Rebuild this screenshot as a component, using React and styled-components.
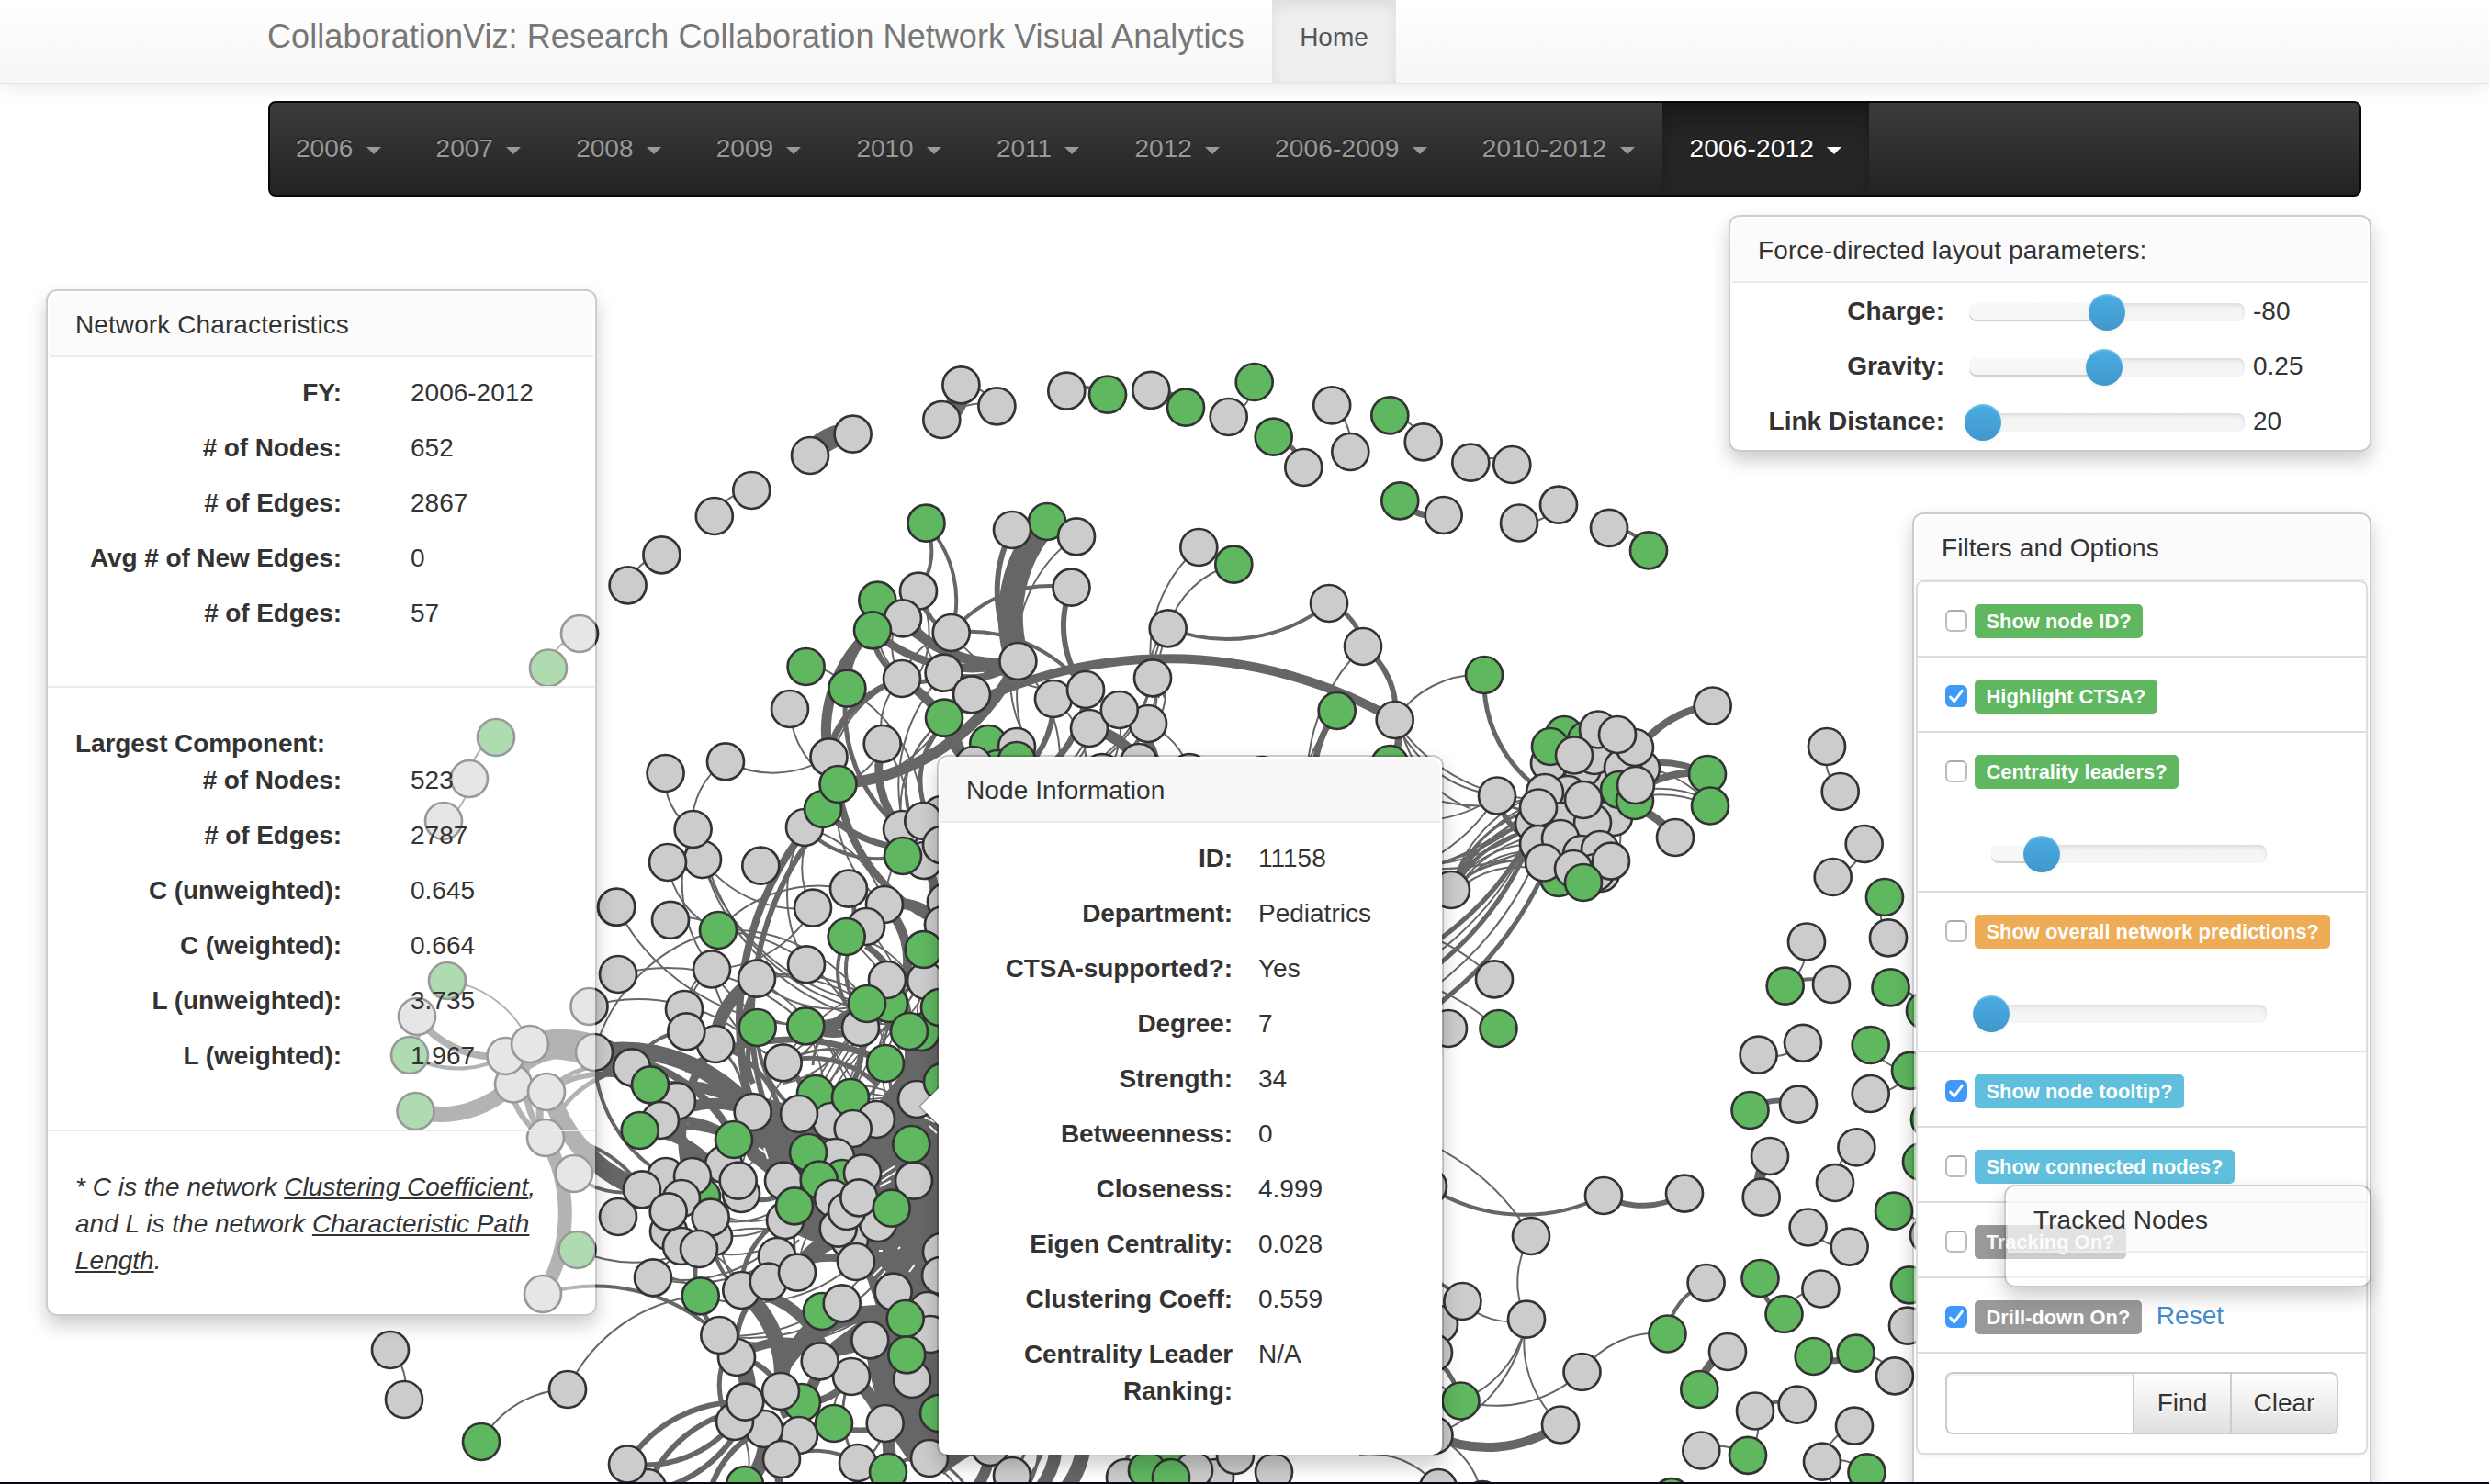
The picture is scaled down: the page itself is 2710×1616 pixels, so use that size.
import React from "react";
import styled, { createGlobalStyle, css } from "styled-components";

const GlobalStyle = createGlobalStyle`
  * { box-sizing: border-box; }
  html, body { margin: 0; padding: 0; background: #fff; }
  body {
    font-family: "Liberation Sans", Arial, Helvetica, sans-serif;
    font-size: 28px;
    line-height: 40px;
    color: #333;
  }
`;

const Page = styled.div`
  position: relative;
  width: 2710px;
  height: 1616px;
  overflow: hidden;
  background: #fff;
  border-bottom: 2px solid #060914;
`;

/* ---------- navigation ---------- */

const TopBar = styled.header`
  position: relative;
  z-index: 1;
  display: flex;
  height: 92px;
  padding-left: 291px;
  background: linear-gradient(to bottom, #fff, #f6f6f6);
  border-bottom: 2px solid #e6e6e6;
  box-shadow: 0 2px 20px rgba(0, 0, 0, 0.1);
`;

const Brand = styled.div`
  width: 1094px;
  padding-top: 20px;
  font-size: 36px;
  letter-spacing: 0.07px;
  color: #777;
  white-space: nowrap;
`;

const TopLink = styled.a`
  width: 135px;
  padding-top: 21px;
  text-align: center;
  color: #555;
  background: #efefef;
  box-shadow: inset 0 6px 16px rgba(0, 0, 0, 0.08);
`;

const YearBar = styled.nav`
  position: relative;
  z-index: 1;
  display: flex;
  width: 2279px;
  height: 104px;
  margin: 18px 0 0 292px;
  background: linear-gradient(to bottom, #3c3c3c, #222);
  border: 2px solid #080808;
  border-radius: 8px;
`;

const YearItem = styled.a`
  display: flex;
  align-items: center;
  gap: 14.3px;
  height: 100px;
  padding: 0 30px;
  color: #999;
  text-shadow: 0 -2px 0 rgba(0, 0, 0, 0.25);
  white-space: nowrap;
  &:first-child { margin-left: -2px; }
  ${(p) => p.$range && css`letter-spacing: 0.17px;`}
  ${(p) =>
    p.$active &&
    css`
      color: #fff;
      background: linear-gradient(to bottom, #1c1c1c, #252525 40%, #252525);
      box-shadow: inset 0 6px 16px rgba(0, 0, 0, 0.2);
    `}
`;

const Caret = styled.span`
  width: 0;
  height: 0;
  margin-top: 4px;
  border-left: 8px solid transparent;
  border-right: 8px solid transparent;
  border-top: 8px solid currentColor;
`;

/* ---------- floating panels ---------- */

const Panel = styled.section`
  position: absolute;
  z-index: 2;
  left: ${(p) => p.$x}px;
  top: ${(p) => p.$y}px;
  width: ${(p) => p.$w}px;
  height: ${(p) => p.$h}px;
  padding: 2px;
  background: ${(p) => (p.$solid ? "#fff" : "rgba(255, 255, 255, 0.5)")};
  background-clip: padding-box;
  border: 2px solid rgba(0, 0, 0, 0.2);
  border-radius: 12px;
  box-shadow: 0 10px 20px rgba(0, 0, 0, 0.2);
`;

const PanelTitle = styled.h3`
  margin: 0;
  padding: 17px 28px 15px;
  font-size: 28px;
  font-weight: 400;
  line-height: 36px;
  letter-spacing: 0.1px;
  background: ${(p) => (p.$solid ? "#f7f7f7" : "rgba(247, 247, 247, 0.5)")};
  border-bottom: 2px solid #ebebeb;
  border-radius: 10px 10px 0 0;
`;

const Section = styled.div`
  margin: 0 -2px;
  padding: ${(p) => p.$pad};
  border-bottom: ${(p) => (p.$last ? "none" : "2px solid #ebebeb")};
`;

const Field = styled.div`
  display: flex;
  align-items: flex-start;
  gap: ${(p) => p.$gap}px;
  margin-bottom: 20px;
`;

const FieldLabel = styled.div`
  width: ${(p) => p.$w}px;
  text-align: right;
  font-weight: 700;
  letter-spacing: -0.1px;
`;

const SubHeading = styled.div`
  font-weight: 700;
  letter-spacing: -0.1px;
`;

const Note = styled.p`
  margin: 0;
  font-style: italic;
  white-space: nowrap;
`;

const Arrow = styled.div`
  position: absolute;
  left: -22px;
  top: 359px;
  width: 0;
  height: 0;
  border: 22px solid transparent;
  border-left-width: 0;
  border-right-color: rgba(0, 0, 0, 0.25);
  &::after {
    content: "";
    position: absolute;
    left: 2px;
    top: -20px;
    border: 20px solid transparent;
    border-left-width: 0;
    border-right-color: #fff;
  }
`;

/* ---------- sliders ---------- */

const SliderRow = styled.div`
  display: flex;
  align-items: center;
  height: 60px;
`;

const SliderLabel = styled.div`
  width: 231px;
  margin: 2px 27px 0 0;
  text-align: right;
  font-weight: 700;
  white-space: nowrap;
`;

const SliderValue = styled.div`
  margin: 2px 0 0 9px;
`;

const Track = styled.div`
  position: relative;
  width: 300px;
  height: 20px;
  margin: ${(p) => p.$margin || "4px 0 0"};
  border-radius: 8px;
  background: linear-gradient(to bottom, #f2f2f2, #f7f7f7);
  box-shadow: inset 0 2px 4px rgba(0, 0, 0, 0.1);
`;

const Filled = styled.div`
  height: 20px;
  border-radius: 8px;
  background: linear-gradient(to bottom, #f9f9f9, #f5f5f5);
  box-shadow: inset 0 -2px 0 rgba(0, 0, 0, 0.15);
`;

const Knob = styled.div`
  position: absolute;
  top: -10px;
  width: 40px;
  height: 40px;
  margin-left: -20px;
  border-radius: 50%;
  background: linear-gradient(to bottom, #49ade3, #4297ca);
  box-shadow: inset 0 2px 0 rgba(255, 255, 255, 0.2), 0 2px 4px rgba(0, 0, 0, 0.05);
`;

function Slider({ at, margin }) {
  return (
    <Track $margin={margin}>
      <Filled style={{ width: at }} />
      <Knob style={{ left: at }} />
    </Track>
  );
}

/* ---------- filter list ---------- */

const FilterList = styled.div`
  display: flex;
  flex-direction: column;
  height: 952px;
  background: #fff;
  border: 2px solid #ddd;
  border-radius: 8px;
  box-shadow: 0 2px 4px rgba(0, 0, 0, 0.05);
`;

const FilterRow = styled.div`
  height: ${(p) => (p.$tall ? 174 : 82)}px;
  padding: 20px 30px;
  border-bottom: 2px solid #ddd;
`;

const FilterLine = styled.div`
  display: flex;
  align-items: center;
  height: 44px;
`;

const Box = styled.span`
  display: flex;
  width: 24px;
  height: 24px;
  margin-right: 8px;
  border-radius: 6px;
  border: ${(p) => (p.$on ? "none" : "2px solid #bcbcbc")};
  border-top-color: #a9a9a9;
  background: ${(p) => (p.$on ? "#3f99fb" : "#fff")};
`;

const Tag = styled.span`
  height: 37px;
  padding: 0 12.5px;
  border-radius: 5px;
  font-size: 21.9px;
  font-weight: 700;
  line-height: 37px;
  color: #fff;
  white-space: nowrap;
  background: ${(p) => ({ green: "#5fb760", orange: "#eeac57", blue: "#60bfdc", gray: "#999" }[p.$tone])};
`;

const ResetLink = styled.a`
  margin-left: 16px;
  margin-top: -3px;
  color: #428bca;
`;

const Search = styled.div`
  display: flex;
  padding: 20px 30px;
`;

const SearchInput = styled.input`
  width: 206px;
  height: 68px;
  padding: 0 12px;
  font: inherit;
  border: 2px solid #ccc;
  border-radius: 8px 0 0 8px;
  box-shadow: inset 0 2px 2px rgba(0, 0, 0, 0.06);
  outline: none;
`;

const SearchButton = styled.button`
  width: ${(p) => p.$w}px;
  height: 68px;
  margin-left: -2px;
  padding: 0;
  font: inherit;
  color: #333;
  text-shadow: 0 2px 0 #fff;
  border: 2px solid #ccc;
  border-radius: ${(p) => (p.$end ? "0 8px 8px 0" : 0)};
  background: linear-gradient(to bottom, #fff, #e0e0e0);
`;

function Filter({ on, tone, label, slider, children }) {
  return (
    <FilterRow $tall={slider !== undefined}>
      <FilterLine>
        <Box $on={on}>
          {on && (
            <svg width="24" height="24" viewBox="0 0 24 24" fill="none">
              <path d="M5.5 13 L9.8 17.8 L18.4 6.2" stroke="#fff" strokeWidth="2.8" strokeLinecap="round" strokeLinejoin="round" />
            </svg>
          )}
        </Box>
        <Tag $tone={tone}>{label}</Tag>
        {children}
      </FilterLine>
      {slider !== undefined && <Slider at={slider} margin="58px 0 0 50px" />}
    </FilterRow>
  );
}

/* ---------- network graph ---------- */

const Canvas = styled.svg`
  position: absolute;
  left: 0;
  top: 0;
`;

/* [x, y] is an ordinary researcher, [x, y, 1] is CTSA-supported; later entries are drawn on top */
const nodes = [
  [597,727.5,1],[631,690],[540,803,1],[511,848],[483,894],[487,1068,1],[454,1107],[446,1149,1],[452.5,1210,1],
  [559,1180.5],[550.5,1150],[577,1137],[595,1189],[641.5,1096],[647,1146],[594,1239],[625,1278],[628.5,1361,1],
  [591,1409],[425,1470],[440,1524],[618,1513],[524,1570,1],[671,988],[673,1061],[673,1325],
  [683.6,637.3],[720.4,604.3],[777.8,562],[818.3,534],[882,496],[928.6,472.7],[1046.4,419.3],[1025.3,457],[1085.4,442.3],
  [1008.5,569.7,1],[1140,568,1],[1102,577],[1172,584.3],[1166.5,639.7],[1000,643.7],[955.3,653.7,1],[983,673.3],[950,686.3,1],
  [1035.7,689],[1108.4,720],[877.6,726,1],[922.4,749.7,1],[982,739],[1027.6,732.7],[1058,756.3],[1147,761],[1250,788],
  [1255,738.3],[1182,751],[1186,793],[1218.8,773],[1028,781.7,1],[860,772],[960.7,810],[902.5,824.3],[876,901],
  [896,881,1],[912.5,854,1],[790,829.3],[724.6,842],[1076.2,810,1],[1107,813],[1086,837,1],[1060,833],[1107,828,1],
  [1240,830],[1200,841],[1295,841],[1374,844],
  [1161.3,425.7],[1206,429.7,1],[1253.3,424.8],[1291,443.7,1],[1337.7,454],[1365.7,416,1],[1386.7,475.7,1],[1419.3,509],[1450.2,441.3],
  [1470.3,492],[1513.3,452.3,1],[1549.7,481.3],[1601.3,503.7],[1646.3,506],[1524.3,545.3,1],[1571.7,561],[1305.3,596],[1343.3,614.7,1],
  [1271.7,684.3],[1447,657],[1484,704],[1455.7,774,1],[1518.7,784],[1513.3,832,1],[1616,735,1],
  [1654,569.5],[1697,549.7],[1752,574.8],[1795,599.4,1],[1864.7,768.5],[1859,843,1],[1862,877.5,1],[1824,912],
  [1630,866.5],[1580,969],
  [1703,800,1],[1727,806,1],[1687,831],[1740,843],[1723,837],[1736,823],[1787,837],[1767,836],[1780,814],[1740,794.5],
  [1707,865],[1682,863],[1757,890],[1700,894],[1734,896],[1763,860,1],[1780,872,1],[1781,855],[1724,871],
  [1670,897],[1675,879.5],[1761,800],[1688,813,1],[1714,822.5],[1675,919],[1699,913],[1722,930],[1742,925],
  [1697,956,1],[1681,939.5],[1743,951],[1737,950],[1713,946],[1754,937.6],[1724,961,1],
  [1989,813],[2003.7,862],[2029.7,919],[1995.7,955],[2052,977,1],
  [765,936],[727,939],[754.6,903],[828.3,942.7],[671.3,987.7],[730,1001.8],[782,1013,1],[775,1055.5],[824,1065.7],
  [1025,887],[982,903],[1006,937],[1005.3,894],[1025,920],[983,932,1],[885,988.7],[963,985],[924,967.7],[943,1009],
  [921.7,1020,1],[1030,982],[1027,1007],[1008,1068],[1005.7,1034,1],[878,1050.3],[937,1119],[968,1093,1],[966,1067],
  [944,1093,1],[1003,1124,1],[1023,1097,1],[990,1123,1],[964,1158,1],[824.7,1119,1],[877.3,1117.3,1],[852.7,1157.3],
  [779,1137],[745,1099],[747.3,1123.3],[737,1199],[688,1162.3],[708,1181.3,1],[998,1197],[1026,1178,1],
  [819.7,1211],[888,1191,1],[905,1221],[870,1213],[926,1195,1],[954,1219],[928.7,1229],[719,1220],[696.7,1231,1],
  [788,1268],[799,1241,1],[910,1260],[880,1255,1],[992.3,1246,1],[995,1285.7],[853,1285.7],[725,1281],[764,1303,1],
  [754,1281],[699,1295.3],[728,1341],[742,1357],[777,1347],[742,1305],[727.7,1319.3],[773.7,1325.7],[761,1360],
  [807,1300],[803.7,1285.7],[711,1391.3],[762.7,1411.3,1],[917,1283,1],[891.7,1284.7,1],[907,1305],[939,1277.3],[925,1350],
  [912.7,1337.7],[956,1332],[922,1319],[935.3,1304.3],[970.7,1315.7,1],[855,1329],[865,1313.3,1],[932,1374],[846,1368],
  [807.3,1405],[836.7,1395.7],[868,1385.7],[1025,1363],[1024,1389],[972.7,1406.7],[1010,1427],[1013,1453],[985.7,1436,1],
  [993,1502],[987.3,1475.3,1],[895,1428,1],[916.7,1419.3],[927,1499],[947.3,1459.3],[892.7,1482.3],[802,1478],[783.3,1454],
  [873,1527,1],[850,1515],[870,1563],[832,1556],[800,1548],[811.3,1526.7],[908,1550,1],[963.7,1550],[1022,1539,1],
  [1012,1588],[851,1589],[934,1593],[967,1603,1],[811,1617,1],[705,1620],[683,1594.5],
  [1078,1576],[1102,1607],[1225,1609],[1269,1591,1],[1249,1601,1],[1323,1609],[1300,1601],[1275,1609,1],
  [1345,1585],[1387,1603],[1566,1620],[1614,1633],
  [1627,1066.4],[1577,1120],[1631.5,1120,1],[1555,1292],[1746,1302],[1834,1299.6],[1667,1346],[1567,1442],[1592.4,1417],
  [1662,1436.7],[1561,1473],[1561.5,1563],[1590.5,1525.5,1],[1699,1551.5],[1722.5,1494],[1815.5,1452.5,1],[1857.6,1397],
  [1881,1472],[1850.3,1513,1],[1967,1025.5],[1943.7,1073.7,1],[1994,1072],[2056,1021.4],[2058.5,1075.3,1],[2096,1100.5,1],
  [1963,1135.8],[1914.6,1148.7],[2036.7,1138,1],[2080,1165.8,1],[2036.7,1191],[1905.5,1209,1],[1958,1202.7],[2101,1219,1],
  [2021.4,1249.3],[1998,1288],[1927,1259],[1917.7,1303.7],[2092,1265,1],[2062,1318.7,1],[2100,1345],[1968.6,1336.5],
  [2013.7,1357.6],[1916.5,1392,1],[1942.5,1431,1],[1982.4,1403.5],[2079,1399.4,1],[2077,1443.6],[1974.7,1477,1],
  [2020.6,1473.6,1],[2063,1498.4],[1956.7,1529.6],[1911,1536.5],[1852.3,1579.5],[1903,1584.8,1],[2019,1552.7],
  [1984,1591.7],[2032.5,1603.4,1],[1820,1630,1],
];

/* [x1, y1, x2, y2, weight]; every link bows clockwise from its source */
const links = [
  [684,637,720,604,2],[778,562,818,534,2],[882,496,929,473,24],[1046,419,1025,457,22],[1046,419,1085,442,2],
  [1025,457,1085,442,2],[1161,426,1206,430,4],[1253,425,1291,444,6],[1366,416,1338,454,2],[1387,476,1419,509,5],
  [1450,441,1470,492,2],[1513,452,1550,481,2],[1601,504,1646,506,2],[1572,561,1524,545,7],[1697,550,1654,569,2],
  [1752,575,1795,599,4],[597,727,631,690,2],[511,848,540,803,2],[511,848,483,894,2],[425,1470,440,1524,2],
  [524,1570,618,1513,2],[618,1513,763,1411,2],[1255,738,1305,596,2],[1262,760,1272,684,2],[1268,760,1276,684,2],
  [1255,760,1270,684,2],[1272,684,1343,615,2],[1447,657,1272,684,4],[1447,657,1484,704,5],[1484,704,1519,784,6],
  [1519,784,1616,735,2],[1682,863,1616,735,5],[1430,900,1484,704,2],[1440,900,1456,774,7],[1424,870,1450,790,2],
  [1519,784,1513,832,8],[1630,866,1519,784,2],[1600,880,1524,784,2],[1690,870,1519,784,2],[1682,863,1500,840,2],
  [1770,840,1865,768,8],[1740,850,1859,843,7],[1763,880,1859,843,8],[1730,890,1862,877,2],[1735,880,1862,872,2],
  [1740,835,1862,877,2],[1724,871,1824,912,9],[1758,890,1760,930,2],[2004,862,1989,813,2],[2030,919,1996,955,2],
  [2056,1021,2052,977,2],[1967,1025,1944,1074,2],[1944,1074,1994,1072,4],[2058,1075,2096,1100,3],
  [1963,1136,1915,1149,2],[2080,1166,2037,1138,2],[2080,1166,2037,1191,2],[1905,1209,1958,1203,6],
  [1918,1304,1927,1259,12],[1998,1288,2021,1249,2],[2014,1358,1969,1336,2],[2062,1319,2100,1345,2],
  [1942,1431,1916,1392,5],[1942,1431,1982,1403,2],[2021,1474,1975,1477,7],[2021,1474,2063,1498,2],
  [1911,1536,1957,1530,4],[1911,1536,1903,1585,2],[1852,1579,1903,1585,2],[1984,1592,2019,1553,2],
  [1984,1592,2032,1603,2],[1984,1592,1990,1640,2],[1850,1513,1881,1472,9],[1815,1452,1858,1397,4],
  [1722,1494,1815,1452,2],[1722,1494,1590,1525,2],[1662,1437,1667,1346,2],[1662,1437,1592,1417,2],
  [1662,1437,1561,1563,2],[1662,1437,1590,1525,2],[1699,1551,1662,1437,2],[1699,1551,1561,1563,10],
  [1561,1563,1614,1633,2],[1834,1300,1746,1302,6],[1746,1302,1555,1292,4],[1440,1220,1667,1346,2],
  [1520,1390,1592,1417,4],[1530,1460,1590,1525,5],[1480,1500,1590,1525,2],[1400,1010,1627,1066,2],[1400,1070,1631,1120,2],
  [550,1150,454,1107,8],[550,1150,446,1149,4],[559,1180,452,1210,17],[487,1068,577,1137,2],[454,1107,446,1149,4],
  [594,1239,591,1409,15],[591,1409,783,1454,4],[777,1347,628,1361,2],[699,1295,625,1278,4],
  [577,1137,688,1162,22],[577,1147,720,1210,14],[559,1170,660,1150,12],[595,1189,688,1162,5],[595,1189,708,1181,6],
  [594,1239,688,1162,5],[699,1295,595,1172,20],[594,1239,555,1172,6],[594,1239,577,1150,7],[594,1239,597,1180,8],
  [594,1239,699,1295,4],[647,1146,820,1211,18],[660,1150,800,1241,8],[700,1190,820,1211,12],[720,1220,820,1211,12],
  [705,1225,799,1241,8],[700,1240,799,1241,7],[697,1231,790,1290,10],[719,1220,760,1290,10],
  [752,1290,779,1137,9],[779,1137,824,1066,14],[820,1211,896,881,8],[835,1211,905,885,6],[754,903,724,842,2],[754,903,790,829,2],
  [902,824,790,829,2],[912,854,860,772,2],[878,726,922,750,2],[902,824,950,686,11],[922,750,950,686,10],
  [982,739,950,686,6],[986,739,956,686,2],[1108,720,950,686,9],[1108,720,983,673,11],[1108,720,955,654,3],
  [1108,720,1140,568,27],[1108,720,1102,577,6],[1108,720,1172,584,2],[1182,751,1166,640,6],[1036,689,1166,640,4],
  [1008,570,1000,644,4],[1008,570,1036,689,4],[1036,689,1182,751,4],[1036,689,1000,644,4],[1040,694,1004,640,2],
  [1182,751,1036,689,2],[982,739,978,673,2],[1000,644,998,739,2],[1028,733,1003,644,2],[982,739,1036,689,2],
  [902,824,982,739,6],[898,824,978,739,2],[906,828,986,739,2],[982,903,961,810,9],
  [982,739,1060,900,10],[1058,756,1108,720,7],[1108,720,1028,733,8],[1028,733,982,739,5],[982,903,922,750,5],[922,750,1005,894,2],
  [1028,782,912,854,2],[961,810,912,854,2],[961,810,982,739,2],[982,900,1028,782,2],
  [961,810,982,932,2],[985,903,1028,733,2],[1028,782,1519,784,10],[1108,720,912,854,12],[1027,1007,912,854,8],
  [1025,920,896,881,7],[983,932,876,901,4],[963,985,912,854,2],[876,901,963,985,2],[963,985,1025,887,2],
  [1060,833,1028,782,8],[1010,887,1018,800,5],[990,890,1010,800,2],[1147,761,1100,850,6],[1147,761,1182,850,2],
  [1182,751,1120,850,7],[1186,793,1250,850,12],[1218,773,1260,850,10],[1190,793,1140,850,2],[1186,793,1132,850,2],
  [1250,788,1170,850,2],[1255,738,1160,850,2],[1262,738,1175,860,2],[1218,773,1190,860,2],[1250,788,1210,860,2],[1255,738,1150,850,2],
  [1250,788,1300,860,2],[1255,738,1250,788,2],[1265,738,1258,788,2],[1108,720,1150,860,2],[1150,860,1112,720,2],[1165,860,1100,720,2],
  [782,1013,727,939,2],[877,1117,671,988,2],[673,1061,877,1117,2],[641,1096,825,1140,2],[647,1146,782,1013,2],
  [730,1002,782,1013,2],[885,989,765,936,2],[944,1093,765,936,2],[940,1100,770,940,2],[944,1110,765,936,2],
  [782,1013,944,1093,2],[782,1013,930,1110,2],[782,1013,924,968,2],[885,989,775,1055,2],[775,1055,754,903,2],
  [885,989,885,901,2],[878,1050,876,901,2],[725,1281,647,1146,4],[688,1162,747,1123,4],[747,1123,776,1055,2],[745,1123,770,1055,2],
  [944,1093,824,1066,2],[944,1093,745,1123,2],[877,1117,775,1055,2],[853,1157,775,1055,2],
  [745,1165,964,1158,7],[853,1157,954,1180,5],[944,1093,877,1117,14],[937,1119,877,1117,8],[825,1211,828,1066,7],[872,1213,825,1119,4],
  [820,1180,825,1119,6],[885,1160,924,1100,3],[924,968,922,1020,5],[963,985,1027,1007,12],[1006,937,1010,1010,10],
  [963,985,985,1070,10],[922,1095,922,1020,4],[932,1095,930,1020,4],[943,1030,990,1130,7],[937,1119,905,1210,6],
  [964,1158,920,1210,3],[964,1158,1010,1200,8],[964,1158,930,1119,2],[853,1157,964,1158,3],[853,1157,877,1213,6],[940,1100,853,1180,2],
  [779,1137,850,1213,5],[779,1137,810,1211,3],
  [807,1405,850,1515,17],[807,1405,895,1465,12],[802,1478,893,1470,10],[850,1515,917,1419,12],[850,1490,960,1430,18],
  [868,1386,930,1345,18],[837,1396,932,1374,8],[711,1391,850,1340,2],[860,1340,711,1391,2],[870,1350,711,1391,2],
  [868,1340,761,1360,2],[850,1329,770,1340,2],[855,1310,774,1326,2],[855,1320,780,1320,2],[853,1300,807,1300,6],[960,1390,783,1454,2],
  [950,1375,783,1454,2],[960,1420,783,1454,2],[932,1374,763,1411,2],[807,1405,850,1329,5],[807,1405,777,1347,4],[812,1405,785,1340,2],
  [761,1360,807,1405,2],[783,1454,761,1360,5],[711,1391,763,1411,2],[802,1478,811,1527,18],[795,1550,793,1470,5],
  [802,1478,850,1515,6],[802,1478,837,1396,6],[683,1594,811,1527,6],[705,1620,811,1535,6],[800,1548,683,1594,6],[812,1540,700,1625,6],
  [770,1640,832,1556,6],[832,1556,811,1617,16],[800,1548,811,1617,2],[860,1640,851,1589,9],[851,1589,934,1593,4],[964,1550,908,1550,6],
  [927,1499,967,1603,14],[893,1482,850,1540,12],[927,1499,873,1527,8],[908,1550,927,1499,2],[934,1593,927,1499,3],
  [964,1550,934,1593,2],[960,1545,940,1593,2],[967,1603,1012,1588,4],[893,1482,960,1450,6],[927,1499,895,1470,4],
  [1012,1588,1060,1640,3],[1000,1588,1050,1640,2],[1022,1600,1150,1570,16],[1078,1576,1040,1640,12],[1078,1576,1102,1607,4],
  [1150,1570,1110,1640,14],[1180,1560,1140,1640,16],[1130,1570,1100,1640,3],[1120,1570,1050,1640,3],[1140,1560,1080,1640,3],
  [1225,1609,1240,1570,4],[1345,1585,1300,1601,4],[1480,1584,1566,1620,2],
];

/* spokes running from the main component into the tight cluster on the right */
const clusterEntries = [[1682,863],[1675,880],[1670,897],[1675,919],[1681,940],[1699,900]];
clusterEntries.forEach(([x, y], i) => {
  links.push([1580, 969, x, y, 2 + (i % 3)]);
  links.push([1584, 972, x, y + 8, 2]);
  if (i < 4) links.push([x, y, 1430 + i * 8, 950 - i * 12, 2]);
  links.push([x, y + 10, 1430 - i * 14, 1080 + i * 22, i % 2 ? 2 : 5]);
});
links.push([1630, 866, 1480, 880, 2], [1630, 866, 1460, 960, 2], [1675, 919, 1630, 866, 6], [1682, 880, 1625, 866, 3]);

/* fine mesh between the hubs and their surroundings */
const hubs = [[970,1110],[985,1200],[860,1325],[940,1280],[1006,1068]];
let seed = 11;
const random = () => {
  seed = (seed * 16807) % 2147483647;
  return seed / 2147483647;
};
const around = nodes.filter(([x, y]) => x > 800 && x < 1030 && y > 1000 && y < 1400);
for (let i = 0; i < 75; i += 1) {
  const [x, y] = around[Math.floor(random() * around.length)];
  const [hx, hy] = hubs[i % hubs.length];
  links.push([x, y, hx + random() * 20 - 10, hy + random() * 20 - 10, 1.8]);
}

const coreShape =
  "M835,1196 L900,1215 L950,1208 L985,1165 L985,1125 L1024,1125 L1024,1590 L990,1592 L962,1550 L948,1500 " +
  "L942,1470 L900,1480 L905,1462 L955,1425 L945,1395 L930,1365 L880,1350 L858,1335 L850,1290 L815,1262 L803,1240 Z";

const glints = [
  [958,1280,974,1270],[960,1286,976,1276],[958,1292,970,1286],[950,1390,960,1380],[956,1394,964,1384],[990,1385,996,1377],
  [957,1362,961,1362],[826,1250,834,1256],[832,1250,836,1262],[1012,1226,1020,1234],[1006,1216,1018,1222],[978,1360,980,1358],
];

function arc([x1, y1, x2, y2]) {
  const r = Math.hypot(x2 - x1, y2 - y1).toFixed(1);
  return `M${x1},${y1} A${r},${r} 0 0,1 ${x2},${y2}`;
}

function NetworkGraph() {
  return (
    <Canvas width="2710" height="1616" viewBox="0 0 2710 1616">
      <g fill="none" stroke="#666">
        {links.map((l, i) => (
          <path key={i} d={arc(l)} strokeWidth={l[4]} />
        ))}
      </g>
      <path d={coreShape} fill="#666" />
      <g stroke="#fff" strokeWidth="2">
        {glints.map(([x1, y1, x2, y2], i) => (
          <line key={i} x1={x1} y1={y1} x2={x2} y2={y2} />
        ))}
      </g>
      <g stroke="#333" strokeWidth="2.7">
        {nodes.map(([x, y, ctsa], i) => (
          <circle key={i} cx={x} cy={y} r="20" fill={ctsa ? "#5fb760" : "#ccc"} />
        ))}
      </g>
    </Canvas>
  );
}

/* ---------- content ---------- */

const years = ["2006", "2007", "2008", "2009", "2010", "2011", "2012", "2006-2009", "2010-2012", "2006-2012"];

const overall = [
  ["FY:", "2006-2012"],
  ["# of Nodes:", "652"],
  ["# of Edges:", "2867"],
  ["Avg # of New Edges:", "0"],
  ["# of Edges:", "57"],
];

const largest = [
  ["# of Nodes:", "523"],
  ["# of Edges:", "2787"],
  ["C (unweighted):", "0.645"],
  ["C (weighted):", "0.664"],
  ["L (unweighted):", "3.735"],
  ["L (weighted):", "1.967"],
];

const nodeInfo = [
  ["ID:", "11158"],
  ["Department:", "Pediatrics"],
  ["CTSA-supported?:", "Yes"],
  ["Degree:", "7"],
  ["Strength:", "34"],
  ["Betweenness:", "0"],
  ["Closeness:", "4.999"],
  ["Eigen Centrality:", "0.028"],
  ["Clustering Coeff:", "0.559"],
  ["Centrality Leader Ranking:", "N/A"],
];

const forces = [
  ["Charge:", 150, "-80"],
  ["Gravity:", 147, "0.25"],
  ["Link Distance:", 15, "20"],
];

function Fields({ rows, labelWidth, gap }) {
  return rows.map(([label, value], i) => (
    <Field key={i} $gap={gap}>
      <FieldLabel $w={labelWidth}>{label}</FieldLabel>
      <div>{value}</div>
    </Field>
  ));
}

export default function App() {
  return (
    <Page>
      <GlobalStyle />
      <NetworkGraph />

      <TopBar>
        <Brand>CollaborationViz: Research Collaboration Network Visual Analytics</Brand>
        <TopLink>Home</TopLink>
      </TopBar>
      <YearBar>
        {years.map((y) => (
          <YearItem key={y} $range={y.length > 4} $active={y === "2006-2012"}>
            {y}
            <Caret />
          </YearItem>
        ))}
      </YearBar>

      <Panel $x={50} $y={315} $w={600} $h={1118}>
        <PanelTitle>Network Characteristics</PanelTitle>
        <Section $pad="19px 30px 39px">
          <Fields rows={overall} labelWidth={290} gap={75} />
        </Section>
        <Section $pad="41px 30px 40px">
          <SubHeading>Largest Component:</SubHeading>
          <Fields rows={largest} labelWidth={290} gap={75} />
        </Section>
        <Section $pad="41px 30px 0" $last>
          <Note>
            * C is the network <u>Clustering Coefficient</u>,<br />
            and L is the network <u>Characteristic Path</u>
            <br />
            <u>Length</u>.
          </Note>
        </Section>
      </Panel>

      <Panel $x={1882} $y={234} $w={700} $h={258}>
        <PanelTitle>Force-directed layout parameters:</PanelTitle>
        {forces.map(([label, at, value]) => (
          <SliderRow key={label}>
            <SliderLabel>{label}</SliderLabel>
            <Slider at={at} />
            <SliderValue>{value}</SliderValue>
          </SliderRow>
        ))}
      </Panel>

      <Panel $x={2082} $y={558} $w={500} $h={1100}>
        <PanelTitle>Filters and Options</PanelTitle>
        <FilterList>
          <Filter tone="green" label="Show node ID?" />
          <Filter tone="green" label="Highlight CTSA?" on />
          <Filter tone="green" label="Centrality leaders?" slider={55} />
          <Filter tone="orange" label="Show overall network predictions?" slider={0} />
          <Filter tone="blue" label="Show node tooltip?" on />
          <Filter tone="blue" label="Show connected nodes?" />
          <Filter tone="gray" label="Tracking On?" />
          <Filter tone="gray" label="Drill-down On?" on>
            <ResetLink>Reset</ResetLink>
          </Filter>
          <Search>
            <SearchInput />
            <SearchButton $w={108}>Find</SearchButton>
            <SearchButton $w={118} $end>Clear</SearchButton>
          </Search>
        </FilterList>
      </Panel>

      <Panel $x={2182} $y={1290} $w={400} $h={112}>
        <PanelTitle>Tracked Nodes</PanelTitle>
      </Panel>

      <Panel $x={1020} $y={822} $w={552} $h={764} $solid>
        <Arrow />
        <PanelTitle $solid>Node Information</PanelTitle>
        <Section $pad="19px 30px 0" $last>
          <Fields rows={nodeInfo} labelWidth={290} gap={28} />
        </Section>
      </Panel>
    </Page>
  );
}
